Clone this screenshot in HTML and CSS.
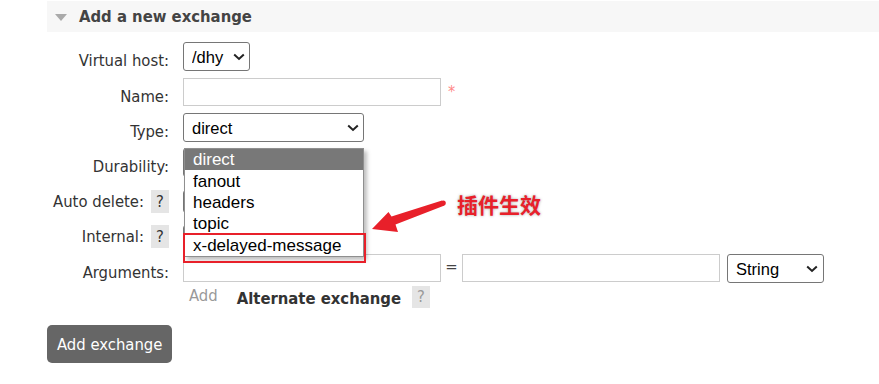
FILE: index.html
```html
<!DOCTYPE html>
<html lang="en">
<head>
  <meta charset="UTF-8">
  <meta name="viewport" content="width=device-width, initial-scale=1.0">
  <title>Add a new exchange</title>
  <link rel="stylesheet" href="styles.css">
</head>
<body>

  <div class="page">
    <div class="section">
      <!-- Section header -->
      <h2 class="section-title"><span class="caret"></span>Add a new exchange</h2>

      <form class="exchange-form" onsubmit="return false">
        <div class="row row-vhost">
          <label class="lbl">Virtual host:</label>
          <span class="sel-box">
            <select class="sel sel-vhost"><option>/dhy</option></select>
            <svg class="chev" width="12" height="8" viewBox="0 0 12 8"><polyline points="1.2,1.5 6,6 10.8,1.5" fill="none" stroke="#222" stroke-width="2"/></svg>
          </span>
        </div>

        <div class="row">
          <label class="lbl">Name:</label>
          <input class="txt" type="text"><span class="mandatory">*</span>
        </div>

        <div class="row">
          <label class="lbl">Type:</label>
          <span class="sel-box">
            <select class="sel sel-type">
              <option>direct</option>
              <option>fanout</option>
              <option>headers</option>
              <option>topic</option>
              <option>x-delayed-message</option>
            </select>
            <svg class="chev" width="12" height="8" viewBox="0 0 12 8"><polyline points="1.2,1.5 6,6 10.8,1.5" fill="none" stroke="#222" stroke-width="2"/></svg>
            <!-- the open option list -->
            <ul class="dropdown">
              <li class="selected">direct</li>
              <li>fanout</li>
              <li>headers</li>
              <li>topic</li>
              <li>x-delayed-message</li>
            </ul>
          </span>
        </div>

        <div class="row row-durability">
          <label class="lbl">Durability:</label>
          <select class="sel sel-small"><option>Durable</option></select>
        </div>

        <div class="row row-help">
          <label class="lbl"><span class="lbl-text">Auto delete:</span> <span class="help">?</span></label>
          <select class="sel sel-small sel-short"><option>No</option></select>
        </div>

        <div class="row row-help row-internal">
          <label class="lbl"><span class="lbl-text">Internal:</span> <span class="help">?</span></label>
          <select class="sel sel-small sel-short"><option>No</option></select>
        </div>

        <div class="row row-args">
          <label class="lbl">Arguments:</label>
          <input class="txt" type="text">
          <span class="eq">=</span>
          <input class="txt" type="text">
          <span class="sel-box sel-box-arg">
            <select class="sel sel-argtype"><option>String</option></select>
            <svg class="chev" width="12" height="8" viewBox="0 0 12 8"><polyline points="1.2,1.5 6,6 10.8,1.5" fill="none" stroke="#222" stroke-width="2"/></svg>
          </span>
        </div>

        <div class="row row-add">
          <span class="lbl"></span>
          <span class="add">Add</span>
          <span class="arg-link">Alternate exchange</span>
          <span class="help help-light">?</span>
        </div>

        <button class="btn" type="submit">Add exchange</button>
      </form>
    </div>

    <!-- screenshot annotation -->
    <div class="mark-box"></div>
    <svg class="mark-arrow" width="90" height="45" viewBox="0 0 90 45">
      <polygon points="8,37 24.5,20 27.5,24.5 78,8.6 80.5,13.4 31.5,32.5 34,40" fill="#e8202a"/>
      <circle cx="79.3" cy="11" r="2.5" fill="#e8202a"/>
    </svg>
    <div class="mark-text">插件生效</div>
  </div>

</body>
</html>
```

FILE: styles.css
```css
/* whole page */
body {
  margin: 0;
  background: #fff;
  font-family: "DejaVu Sans Condensed", "DejaVu Sans", sans-serif;
  font-size: 16.5px;
  color: #333;
}

.page {
  position: relative;
  height: 384px;
  padding-left: 47px;
  padding-top: 1px;
  box-sizing: border-box;
}

.section-title {
  display: flex;
  align-items: center;
  height: 31px;
  margin: 0;
  padding-left: 8px;
  background: #f7f7f7;
  color: #444;
  font-size: 16.5px;
  font-weight: bold;
}

/* little grey triangle before the title */
.caret {
  width: 0;
  height: 0;
  border-left: 6px solid transparent;
  border-right: 6px solid transparent;
  border-top: 7px solid #aaa;
  margin-right: 12px;
  margin-top: 1px;
}

.exchange-form {
  padding-top: 10px;
}

.row {
  display: flex;
  align-items: flex-start;
  margin-bottom: 6px;
}

.row-vhost {
  margin-bottom: 7px;
}

.lbl {
  width: 122px;
  margin-right: 14px;
  padding-top: 9px;
  line-height: 20px;
  text-align: right;
  flex-shrink: 0;
}

.row-help .lbl {
  display: flex;
  justify-content: flex-end;
  align-items: flex-start;
  height: 23px;
  padding-top: 0;
}

.lbl-text {
  padding-top: 2px;
}

.help {
  display: inline-block;
  width: 18px;
  height: 23px;
  line-height: 23px;
  margin-left: 7px;
  background: #e5e5e5;
  color: #333;
  text-align: center;
}

.help-light {
  height: 22px;
  line-height: 22px;
  color: #999;
  margin-left: 11px;
}

/* form controls */
.sel {
  height: 29px;
  border: 1px solid #767676;
  border-radius: 3px;
  background: #fff;
  color: #000;
  font-family: "Liberation Sans", Arial, sans-serif;
  font-size: 16.5px;
  padding: 0 8px;
  appearance: none;
  -webkit-appearance: none;
}

.sel-box {
  position: relative;
  display: flex;
}

.chev {
  position: absolute;
  right: 5px;
  top: 11px;
  pointer-events: none;
}

.sel-vhost {
  width: 67px;
}

.sel-type {
  width: 181px;
}

.sel-small {
  width: 110px;
}

.sel-short {
  height: 23px;
}

.sel-box-arg {
  margin-left: 7px;
}

.sel-argtype {
  width: 97px;
}

.sel-box-arg .chev {
  right: 6px;
}

.txt {
  width: 258px;
  height: 28px;
  box-sizing: border-box;
  border: 1px solid #ccc;
  margin: 0;
}

.mandatory {
  color: #f88;
  margin-left: 7px;
  padding-top: 4px;
  font-size: 16px;
}

.eq {
  width: 21px;
  padding-top: 3px;
  line-height: 20px;
  text-align: center;
  color: #444;
}

.row-durability {
  margin-bottom: 13px;
}

.row-help {
  margin-bottom: 12px;
}

.row-internal {
  margin-bottom: 6px;
}

.row-args {
  margin-bottom: 3px;
}

.row-add {
  height: 22px;
  margin-bottom: 17px;
  line-height: 20px;
}

.row-add .lbl {
  padding-top: 0;
}

.add {
  color: #999;
  margin-left: 6px;
  margin-right: 19px;
}

.arg-link {
  font-weight: bold;
  color: #333;
  padding-top: 3px;
}

.btn {
  height: 38px;
  padding: 0 10px;
  border: none;
  border-radius: 5px;
  background: #666;
  color: #fff;
  font-family: "DejaVu Sans Condensed", "DejaVu Sans", sans-serif;
  font-size: 16.5px;
  cursor: pointer;
}

/* open list of the Type select */
.dropdown {
  position: absolute;
  top: 35px;
  left: 1px;
  width: 180px;
  margin: 0;
  padding: 0;
  list-style: none;
  background: #fff;
  border: 1px solid #8f8f8f;
  box-sizing: border-box;
  box-shadow: 3px 3px 4px rgba(0, 0, 0, 0.25);
  font-family: "Liberation Sans", Arial, sans-serif;
  font-size: 17px;
  color: #000;
  z-index: 2;
}

.dropdown li {
  line-height: 17px;
  padding: 2.2px 8px;
}

.dropdown li.selected {
  background: #787878;
  color: #fff;
}

/* red annotation */
.mark-box {
  position: absolute;
  left: 183px;
  top: 233px;
  width: 183px;
  height: 30px;
  border: 2px solid #e8202a;
  box-sizing: border-box;
  z-index: 3;
}

.mark-arrow {
  position: absolute;
  left: 364px;
  top: 192px;
  z-index: 3;
}

.mark-text {
  position: absolute;
  left: 457px;
  top: 194px;
  font-family: "Noto Sans CJK SC", sans-serif;
  font-size: 21px;
  font-weight: bold;
  line-height: 1;
  color: #e8202a;
  text-shadow: 0 0 3px rgba(0, 0, 0, 0.35);
}
```
